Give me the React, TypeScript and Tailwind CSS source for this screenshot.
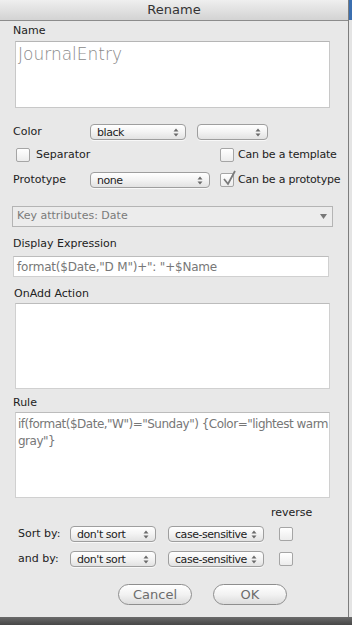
import React from "react";

const font = { fontFamily: '"DejaVu Sans", "Liberation Sans", sans-serif' };

function Arrows() {
  return (
    <svg width="6" height="9" viewBox="0 0 6 9" className="shrink-0">
      <path d="M0.5 3.5 L3 0.5 L5.5 3.5 Z" fill="#6a6a6a" />
      <path d="M0.5 5.5 L3 8.5 L5.5 5.5 Z" fill="#6a6a6a" />
    </svg>
  );
}

function Popup({ w, label }: { w: string; label: string }) {
  return (
    <div
      className={`${w} h-[16px] rounded-[4px] border border-[#9e9e9e] bg-gradient-to-b from-[#ffffff] via-[#f3f3f3] to-[#e2e2e2] flex items-center pl-[6px] pr-[6px] text-[11px] text-[#222] leading-none shadow-[0_1px_0_rgba(255,255,255,0.7)]`}
    >
      <span className="flex-1 whitespace-nowrap tracking-[-0.45px] overflow-hidden">{label}</span>
      <Arrows />
    </div>
  );
}

function Check({ checked }: { checked?: boolean }) {
  return (
    <div className="relative w-[14px] h-[14px] shrink-0 rounded-[2px] border border-[#a5a5a5] bg-gradient-to-b from-[#ffffff] to-[#ececec]">
      {checked && (
        <svg width="16" height="16" viewBox="0 0 16 16" className="absolute left-[1px] top-[-4px]">
          <path d="M2 9 L6 14 L13 1" stroke="#7a7a7a" strokeWidth="1.8" fill="none" />
        </svg>
      )}
    </div>
  );
}

export default function App() {
  return (
    <div className="w-[352px] h-[625px] bg-[#4f4f4f] overflow-hidden flex flex-col" style={font}>
      <div className="flex h-[617px]">
        <div className="w-[348px] h-full bg-[#e8e8e8] flex flex-col">
          <div className="h-[21px] shrink-0 bg-gradient-to-b from-[#efefef] to-[#d3d3d3] border-b border-[#8c8c8c] flex items-center justify-center text-[13px] text-[#333]">
            Rename
          </div>

          <div className="pl-[13px] mt-[3px] text-[11px] leading-[14px] text-[#222]">Name</div>
          <div className="ml-[15px] mt-[3px] w-[315px] h-[67px] bg-white border border-[#c8c8c8] border-t-[#b5b5b5] pl-[2px] pt-[1px]">
            <span className="text-[17px] leading-[22px] font-extralight text-[#8a8a8a]">JournalEntry</span>
          </div>

          <div className="mt-[16px] h-[16px] flex items-center">
            <span className="w-[90px] pl-[13px] text-[11px] text-[#222]">Color</span>
            <Popup w="w-[96px]" label="black" />
            <div className="ml-[11px]">
              <Popup w="w-[71px]" label="" />
            </div>
          </div>

          <div className="mt-[8px] h-[14px] flex items-center">
            <div className="w-[220px] flex items-center pl-[16px]">
              <Check />
              <span className="ml-[6px] text-[11px] text-[#222]">Separator</span>
            </div>
            <Check />
            <span className="ml-[4px] text-[11px] text-[#222] whitespace-nowrap tracking-[-0.2px]">Can be a template</span>
          </div>

          <div className="mt-[10px] h-[16px] flex items-center">
            <span className="w-[90px] pl-[13px] text-[11px] text-[#222]">Prototype</span>
            <Popup w="w-[120px]" label="none" />
            <div className="ml-[10px]"><Check checked /></div>
            <span className="ml-[4px] text-[11px] text-[#222] whitespace-nowrap tracking-[-0.2px]">Can be a prototype</span>
          </div>

          <div className="ml-[12px] mt-[18px] w-[321px] h-[21px] border border-[#b4b4b4] bg-[#ececec] flex items-center pl-[4px] pr-[5px]">
            <span className="flex-1 text-[11px] text-[#7a7a7a]">Key attributes: Date</span>
            <svg width="7" height="5" viewBox="0 0 7 5"><path d="M0 0 L7 0 L3.5 5 Z" fill="#777" /></svg>
          </div>

          <div className="pl-[13px] mt-[10px] text-[11px] leading-[14px] text-[#222]">Display Expression</div>
          <div className="ml-[13px] mt-[5px] w-[316px] h-[21px] bg-white border border-[#d0d0d0] border-t-[#bcbcbc] flex items-center pl-[3px]">
            <span className="text-[12px] text-[#777] tracking-[-0.2px] whitespace-nowrap">format($Date,"D M")+": "+$Name</span>
          </div>

          <div className="pl-[14px] mt-[10px] text-[11px] leading-[14px] text-[#222]">OnAdd Action</div>
          <div className="ml-[15px] mt-[2px] w-[315px] h-[86px] bg-white border border-[#d0d0d0] border-t-[#bcbcbc]" />

          <div className="pl-[13px] mt-[7px] text-[11px] leading-[14px] text-[#222]">Rule</div>
          <div className="ml-[15px] mt-[2px] w-[315px] h-[86px] bg-white border border-[#d0d0d0] border-t-[#bcbcbc] pl-[2px] pt-[3px]">
            <div className="text-[12px] leading-[17px] text-[#777] tracking-[-0.5px] whitespace-nowrap">
              if(format($Date,"W")="Sunday") {"{"}Color="lightest warm
            </div>
            <div className="text-[12px] leading-[17px] text-[#777] tracking-[-0.5px] whitespace-nowrap">
              gray"{"}"}
            </div>
          </div>

          <div className="mt-[8px] h-[14px] pl-[271px] text-[11px] leading-[14px] text-[#222]">reverse</div>

          <div className="mt-[6px] h-[16px] flex items-center">
            <span className="w-[70px] pl-[18px] text-[11px] text-[#222]">Sort by:</span>
            <Popup w="w-[86px]" label="don't sort" />
            <div className="ml-[12px]"><Popup w="w-[96px]" label="case-sensitive" /></div>
            <div className="ml-[15px]"><Check /></div>
          </div>

          <div className="mt-[9px] h-[16px] flex items-center">
            <span className="w-[70px] pl-[18px] text-[11px] text-[#222]">and by:</span>
            <Popup w="w-[86px]" label="don't sort" />
            <div className="ml-[12px]"><Popup w="w-[96px]" label="case-sensitive" /></div>
            <div className="ml-[15px]"><Check /></div>
          </div>

          <div className="mt-[17px] h-[21px] flex items-center pl-[118px] gap-[21px]">
            <div className="w-[74px] h-[21px] rounded-full border border-[#8e8e8e] bg-gradient-to-b from-[#ffffff] via-[#f2f2f2] to-[#dcdcdc] flex items-center justify-center text-[13px] text-[#6c6c6c]">
              Cancel
            </div>
            <div className="w-[74px] h-[21px] rounded-full border border-[#8e8e8e] bg-gradient-to-b from-[#ffffff] via-[#f2f2f2] to-[#dcdcdc] flex items-center justify-center text-[13px] text-[#6c6c6c]">
              OK
            </div>
          </div>
        </div>
        <div className="w-[4px] h-full flex flex-col border-l border-[#7d7d7d]">
          <div className="h-[20px] bg-[#3b6fb0]" />
          <div className="flex-1 bg-[#e4e4e4]" />
        </div>
      </div>
      <div className="flex-1 bg-gradient-to-b from-[#6a6a6a] to-[#474747]" />
    </div>
  );
}
